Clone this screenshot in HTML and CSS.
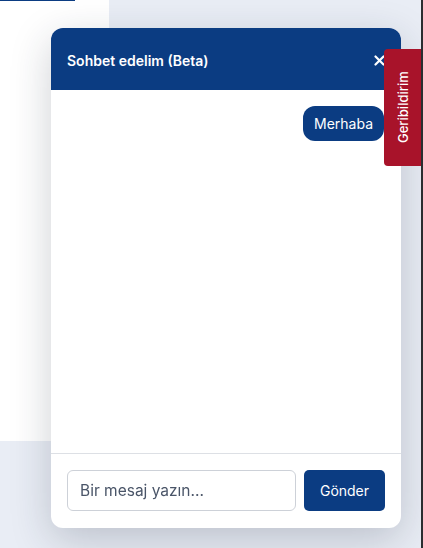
FILE: index.html
```html
<!DOCTYPE html>
<html lang="tr">
<head>
  <meta charset="UTF-8">
  <meta name="viewport" content="width=device-width, initial-scale=1">
  <title>Sohbet</title>
  <link rel="stylesheet" href="styles.css">
</head>
<body>

<div class="page">
  <div class="side-panel">
    <div class="side-bar"></div>
  </div>
</div>

<div class="chat-box">
  <div class="chat-header">
    <span class="chat-title">Sohbet edelim (Beta)</span>
    <button class="chat-close" aria-label="Kapat">
      <svg width="11" height="11" viewBox="0 0 11 11">
        <path d="M1.5 1.5 L9.5 9.5 M9.5 1.5 L1.5 9.5" stroke="#fff" stroke-width="2.2" stroke-linecap="round"/>
      </svg>
    </button>
  </div>

  <div class="chat-messages">
    <div class="msg msg-user">Merhaba</div>
  </div>

  <div class="chat-footer">
    <input type="text" class="chat-input" placeholder="Bir mesaj yazın...">
    <button class="chat-send">Gönder</button>
  </div>
</div>

<a class="feedback-tab" href="#">Geribildirim</a>

</body>
</html>
```

FILE: styles.css
```css
html, body {
  height: 100%;
}
body {
  margin: 0;
  background: #e9edf5;
  font-family: Inter, "Noto Sans", sans-serif;
  box-shadow: inset -2px 0 0 #2c2e31;
}
.page {
  height: 100%;
}
.side-panel {
  width: 109px;
  height: 441px;
  background: #ffffff;
}
.side-bar {
  width: 75px;
  height: 1px;
  background: #0b3c82;
}
.chat-box {
  position: fixed;
  left: 51px;
  top: 28px;
  width: 350px;
  height: 500px;
  background: #ffffff;
  border-radius: 12px;
  box-shadow: 0 12px 40px rgba(30, 40, 60, 0.22);
  display: flex;
  flex-direction: column;
  overflow: hidden;
}
.chat-header {
  height: 62px;
  background: #0b3c82;
  color: #ffffff;
  display: flex;
  align-items: center;
  justify-content: space-between;
  padding: 0 16px;
}
.chat-title {
  font-size: 14px;
  font-weight: 600;
  margin-top: 2px;
}
.chat-close {
  background: none;
  border: none;
  padding: 0;
  margin-right: 0;
  margin-top: 3px;
  display: flex;
  cursor: pointer;
}
.chat-messages {
  flex: 1;
  padding: 16px 17px;
  display: flex;
  flex-direction: column;
  align-items: flex-end;
  border-bottom: 1px solid #dde0e5;
}
.msg {
  font-size: 14px;
  line-height: 19px;
  padding: 8px 11px;
  border-radius: 12px;
}
.msg-user {
  background: #0b3c82;
  color: #ffffff;
}
.chat-footer {
  height: 74px;
  box-sizing: border-box;
  padding: 16px 16px 17px;
  display: flex;
  gap: 8px;
}
.chat-input {
  flex: 1;
  min-width: 0;
  height: 41px;
  box-sizing: border-box;
  border: 1px solid #cdd1d8;
  border-radius: 6px;
  padding: 0 12px;
  font-family: inherit;
  font-size: 15.5px;
  color: #2d3748;
}
.chat-input::placeholder {
  color: #4a5568;
}
.chat-send {
  width: 81px;
  height: 41px;
  border: none;
  border-radius: 5px;
  background: #0b3c82;
  color: #ffffff;
  font-family: inherit;
  font-size: 14px;
  cursor: pointer;
}
.feedback-tab {
  position: fixed;
  right: 2px;
  top: 49px;
  width: 37px;
  height: 117px;
  background: #a8132a;
  color: #ffffff;
  display: flex;
  align-items: center;
  justify-content: center;
  text-decoration: none;
  font-size: 13px;
  font-weight: 500;
  writing-mode: vertical-rl;
  transform: rotate(180deg);
  border-radius: 0 4px 4px 0;
}
```
